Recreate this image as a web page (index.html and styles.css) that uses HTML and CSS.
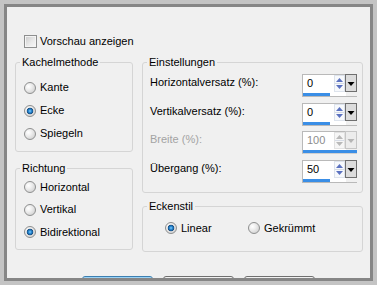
FILE: index.html
```html
<!DOCTYPE html>
<html lang="de">
<head>
<meta charset="utf-8">
<title>Kacheln</title>
<link rel="stylesheet" href="styles.css">
</head>
<body>
<div class="frame">
  <div class="win">
    <div class="content">
      <div class="check-row"><span class="checkbox"></span><span>Vorschau anzeigen</span></div>
      <div class="cols">
        <div class="col">
          <fieldset class="grp">
            <legend>Kachelmethode</legend>
            <div class="body body-kachel">
              <div class="opt"><span class="radio"></span>Kante</div>
              <div class="opt"><span class="radio on"></span>Ecke</div>
              <div class="opt"><span class="radio"></span>Spiegeln</div>
            </div>
          </fieldset>
          <fieldset class="grp grp-richtung">
            <legend>Richtung</legend>
            <div class="body body-richtung">
              <div class="opt"><span class="radio"></span>Horizontal</div>
              <div class="opt"><span class="radio"></span>Vertikal</div>
              <div class="opt"><span class="radio on"></span>Bidirektional</div>
            </div>
          </fieldset>
        </div>
        <div class="col">
          <fieldset class="grp">
            <legend>Einstellungen</legend>
            <div class="body body-einst">
              <div class="row">
                <span class="lbl">Horizontalversatz (%):</span>
                <div class="spin">
                  <div class="field"><span class="val">0</span><svg class="arr" width="11" height="17" viewBox="0 0 11 17"><rect x="0.5" y="0.5" width="10" height="16" class="arr-box"/><line x1="1" y1="8.5" x2="10" y2="8.5" class="arr-sep"/><path d="M2 7h7L5.5 3z M2 10h7L5.5 14z"/></svg></div>
                  <div class="drop"><svg width="10" height="16" viewBox="0 0 10 16"><path d="M1.5 7h7L5 11z"/></svg></div>
                  <div class="track"><div class="fill" style="width:27px"></div></div>
                </div>
              </div>
              <div class="row">
                <span class="lbl">Vertikalversatz (%):</span>
                <div class="spin">
                  <div class="field"><span class="val">0</span><svg class="arr" width="11" height="17" viewBox="0 0 11 17"><rect x="0.5" y="0.5" width="10" height="16" class="arr-box"/><line x1="1" y1="8.5" x2="10" y2="8.5" class="arr-sep"/><path d="M2 7h7L5.5 3z M2 10h7L5.5 14z"/></svg></div>
                  <div class="drop"><svg width="10" height="16" viewBox="0 0 10 16"><path d="M1.5 7h7L5 11z"/></svg></div>
                  <div class="track"><div class="fill" style="width:27px"></div></div>
                </div>
              </div>
              <div class="row disabled">
                <span class="lbl">Breite (%):</span>
                <div class="spin">
                  <div class="field"><span class="val">100</span><svg class="arr" width="11" height="17" viewBox="0 0 11 17"><rect x="0.5" y="0.5" width="10" height="16" class="arr-box"/><line x1="1" y1="8.5" x2="10" y2="8.5" class="arr-sep"/><path d="M2 7h7L5.5 3z M2 10h7L5.5 14z"/></svg></div>
                  <div class="drop"><svg width="10" height="16" viewBox="0 0 10 16"><path d="M1.5 7h7L5 11z"/></svg></div>
                  <div class="track"><div class="fill" style="width:54px"></div></div>
                </div>
              </div>
              <div class="row">
                <span class="lbl">Übergang (%):</span>
                <div class="spin">
                  <div class="field"><span class="val">50</span><svg class="arr" width="11" height="17" viewBox="0 0 11 17"><rect x="0.5" y="0.5" width="10" height="16" class="arr-box"/><line x1="1" y1="8.5" x2="10" y2="8.5" class="arr-sep"/><path d="M2 7h7L5.5 3z M2 10h7L5.5 14z"/></svg></div>
                  <div class="drop"><svg width="10" height="16" viewBox="0 0 10 16"><path d="M1.5 7h7L5 11z"/></svg></div>
                  <div class="track"><div class="fill" style="width:27px"></div></div>
                </div>
              </div>
            </div>
          </fieldset>
          <fieldset class="grp grp-ecken">
            <legend>Eckenstil</legend>
            <div class="body body-ecken">
              <div class="opt"><span class="radio on"></span>Linear</div>
              <div class="opt"><span class="radio"></span>Gekrümmt</div>
            </div>
          </fieldset>
        </div>
      </div>
      <div class="buttons">
        <span class="btn btn-default"></span>
        <span class="btn"></span>
        <span class="btn"></span>
      </div>
    </div>
  </div>
</div>
</body>
</html>
```
FILE: styles.css
```css
* { box-sizing: border-box; }
html, body { margin: 0; padding: 0; }
body {
  width: 377px;
  height: 285px;
  overflow: hidden;
  font-family: "Liberation Sans", Arial, sans-serif;
  font-size: 11px;
  line-height: 13px;
  color: #000;
  background: #c4c4c4;
}
.frame {
  width: 377px;
  height: 285px;
  border: 4px solid #c4c4c4;
}
.win {
  height: 100%;
  border: 3px solid #868686;
  background: #f0f0f0;
  overflow: hidden;
}
.content {
  height: 100%;
  overflow: hidden;
}
.check-row {
  display: flex;
  align-items: center;
  gap: 3px;
  height: 13px;
  margin: 28px 0 0 17px;
}
.checkbox {
  width: 13px;
  height: 13px;
  flex: none;
  border: 1px solid #8e8f8f;
  background: linear-gradient(135deg, #c9c9c9 0%, #e9e9e9 55%, #f8f8f8 100%);
  box-shadow: inset 0 0 0 1px #f4f4f4;
}
.cols {
  display: grid;
  grid-template-columns: 118px 221px;
  column-gap: 9px;
  margin: 8px 0 0 8px;
  align-items: start;
}
.grp {
  margin: 0;
  padding: 0;
  min-width: 0;
  border: 1px solid #d5d5d5;
  border-radius: 3px;
}
.grp legend {
  margin-left: 4px;
  padding: 0 2px;
  line-height: 13px;
}
.grp-richtung { margin-top: 10px; }
.grp-ecken { margin-top: 7px; }
.body-kachel { padding: 7px 0 6px 8px; }
.body-kachel .opt { height: 23px; }
.body-richtung { padding: 1px 0 5.5px 8px; }
.body-richtung .opt { height: 22.5px; }
.opt {
  display: flex;
  align-items: center;
  gap: 4px;
  height: 23px;
}
.radio {
  width: 12px;
  height: 12px;
  flex: none;
  border-radius: 50%;
  border: 1px solid #8e8f8f;
  background: radial-gradient(circle at 35% 35%, #ffffff 0, #f1f1f1 30%, #d6d6d6 75%, #cacaca 100%);
}
.radio.on {
  background:
    radial-gradient(circle at 50% 50%, #8fd0fa 0, #2f92dc 1.3px, #17609f 2.6px, #26466a 3.2px, rgba(255,255,255,0) 3.6px),
    radial-gradient(circle at 35% 35%, #ffffff 0, #f1f1f1 30%, #d6d6d6 75%, #cacaca 100%);
}
.body-einst { padding: 5px 5px 9px 7px; }
.row {
  display: flex;
  justify-content: space-between;
  align-items: flex-start;
  height: 28.67px;
}
.row:last-child { height: 23px; }
.lbl { line-height: 16px; }
.spin {
  display: grid;
  grid-template-columns: 43px 12px;
  grid-template-rows: 18px 5px;
  width: 55px;
}
.field {
  display: flex;
  background: #fff;
  border-left: 1px solid #b9b9b9;
  border-top: 1px solid #b9b9b9;
}
.val {
  flex: 1;
  padding-left: 4px;
  line-height: 16px;
}
.arr { display: block; fill: #5b72c0; }
.arr-box { fill: #f7f9fc; stroke: #dde3ec; stroke-width: 1; }
.arr-sep { stroke: #d6dce6; stroke-width: 1; }
.drop {
  border: 1px solid #6f6f6f;
  background: #dcdcdc;
  fill: #000;
}
.drop svg { display: block; }
.track {
  grid-column: 1 / 3;
  background: linear-gradient(to right, #fff 43px, transparent 43px);
  border-left: 1px solid #b9b9b9;
  border-bottom: 1px solid #b9b9b9;
  padding-top: 1px;
}
.fill {
  height: 3px;
  background: #3a8ee6;
}
.disabled .lbl { color: #a3a3a3; }
.disabled .val { color: #8c8c8c; }
.disabled .arr { fill: #b9b9b9; }
.disabled .arr-box { fill: #f6f6f6; stroke: #e2e2e2; }
.disabled .drop { border-color: #c6c6c6; background: #ececec; fill: #b5b5b5; }
.disabled .track { border-bottom-color: #d0d0d0; }
.body-ecken {
  display: grid;
  grid-template-columns: 83px auto;
  padding: 4px 0 11px 22px;
}
.buttons {
  display: flex;
  gap: 10px;
  margin: 24px 0 0 75px;
}
.btn {
  width: 71px;
  height: 23px;
  flex: none;
  border: 1px solid #707070;
  border-radius: 3px;
  background: linear-gradient(#f2f2f2, #dddddd);
}
.btn-default {
  border-color: #3c7fb1;
  box-shadow: inset 0 0 0 1px #9ad2f5;
}
```
